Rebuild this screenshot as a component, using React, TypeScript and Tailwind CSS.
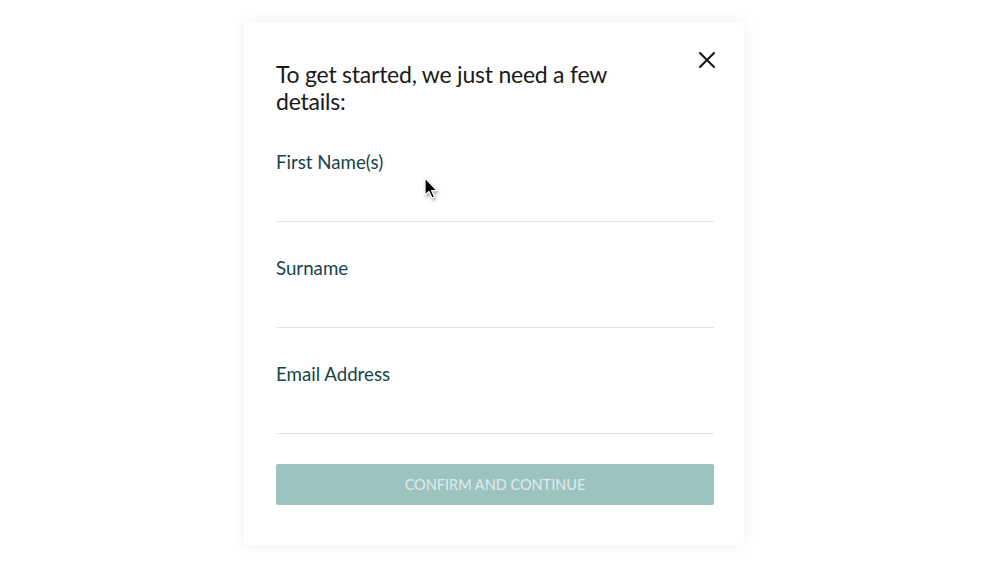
import { X } from 'lucide-react'

const FIELDS = ['First Name(s)', 'Surname', 'Email Address']

export default function App() {
  return (
    <div className="relative min-h-[562px] w-full bg-white font-['Lato','Noto_Sans',sans-serif] pt-[22px] pl-[244px]">
      {/* Modal card */}
      <div className="relative w-[500px] h-[523px] bg-white rounded-[4px] shadow-[0_0_14px_rgba(0,0,0,0.07)] pl-8 pr-[30px] pt-[39px] pb-10">
        <button className="absolute right-[23px] top-[24px] text-[#1a1a1a]" aria-label="Close">
          <X size={28} strokeWidth={1.8} />
        </button>

        <h1 className="text-[23px] leading-[27px] tracking-[-0.01em] text-[#1a1a1a] max-w-[380px]">
          To get started, we just need a few details:
        </h1>

        <div className="mt-[35px] flex flex-col gap-[34px]">
          {FIELDS.map((label) => (
            <div key={label}>
              <label className="block text-[18.7px] leading-[24px] text-[#17444a]">{label}</label>
              <input className="block w-full h-[48px] border-b border-[#e4e4e4] outline-none bg-transparent" />
            </div>
          ))}
        </div>

        <button className="mt-[30px] w-full h-[41px] rounded-[2px] bg-[#9dc3c1] text-[#dfeceb] text-[14.5px] uppercase">
          Confirm and continue
        </button>
      </div>

      {/* mouse pointer */}
      <svg
        className="absolute left-[423px] top-[177px] drop-shadow-[1px_2px_1.5px_rgba(0,0,0,0.35)]"
        width="16"
        height="24"
        viewBox="0 0 16 24"
      >
        <path
          d="M2 1 L2 18 L6 14.5 L9 21 L11.5 20 L8.6 13.6 L14 13.6 Z"
          fill="#000"
          stroke="#fff"
          strokeWidth="1.2"
          strokeLinejoin="round"
        />
      </svg>
    </div>
  )
}
